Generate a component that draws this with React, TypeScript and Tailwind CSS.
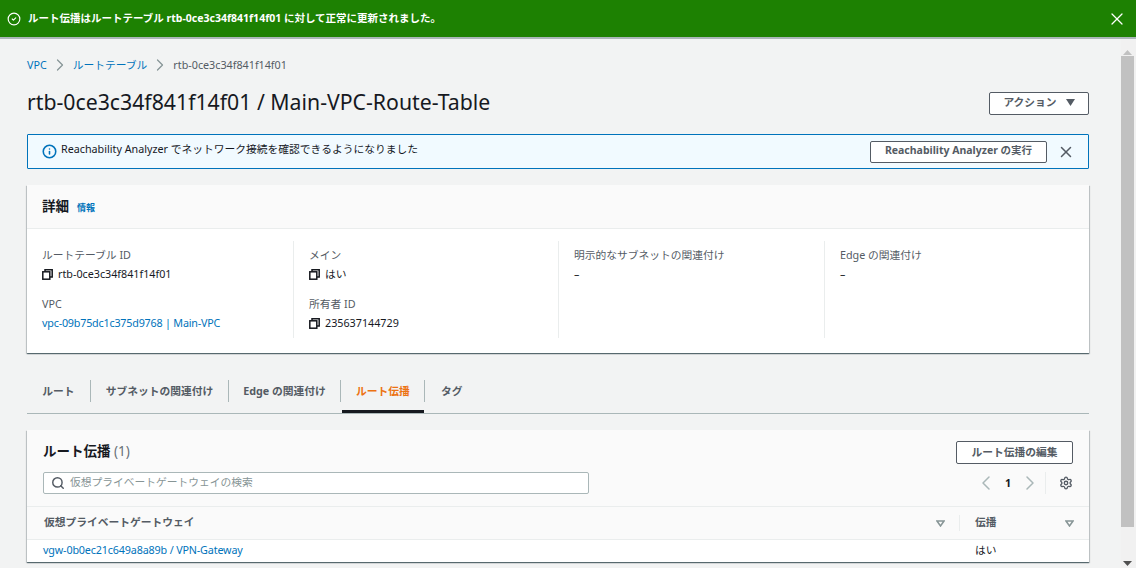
import { X, ChevronLeft, ChevronRight, Search, Settings, Info, CircleCheck } from "lucide-react";

const FONT = "[font-family:'Noto_Sans','Noto_Sans_CJK_JP',sans-serif]";

function CopyIcon() {
  return (
    <svg width="11" height="11" viewBox="0 0 11 11" fill="none" stroke="#16191f" strokeWidth="1.5" className="shrink-0">
      <rect x="0.8" y="2.8" width="7" height="7.4" fill="#fff" />
      <path d="M3 2.5V0.8H10.2V8H8" />
    </svg>
  );
}

function SortIcon() {
  return (
    <svg width="9" height="7" viewBox="0 0 9 7" fill="none" stroke="#879596" strokeWidth="1.5">
      <path d="M1 1H8L4.5 6Z" />
    </svg>
  );
}

function Field({ label, children }: { label: string; children: React.ReactNode }) {
  return (
    <div className="h-[49px]">
      <div className="text-[#545b64] leading-[20px]">{label}</div>
      <div className="flex items-center gap-[5px] leading-[18px] text-[#16191f]">{children}</div>
    </div>
  );
}

const tabs = [
  { name: "ルート", w: "w-[64px]" },
  { name: "サブネットの関連付け", w: "w-[138px]" },
  { name: "Edge の関連付け", w: "w-[112px]" },
];

export default function App() {
  return (
    <div className={`${FONT} h-[568px] w-[1136px] overflow-hidden bg-[#f2f3f3] text-[10.75px] flex flex-col`}>
      <div className="h-[39px] shrink-0 bg-[#1d8102] border-b-2 border-[#aab7b8] flex items-center pl-[7px] pr-[9px] text-white">
        <CircleCheck size={14} strokeWidth={2} />
        <span className="ml-[7px] text-[10.5px] font-bold flex-1">ルート伝播はルートテーブル rtb-0ce3c34f841f14f01 に対して正常に更新されました。</span>
        <X size={20} strokeWidth={1.5} />
      </div>

      <div className="flex-1 flex min-h-0">
        <main className="flex-1 pl-[27px] pr-[32px] min-w-0">
          <nav className="h-[52px] pt-[17px] flex items-start text-[#0073bb] leading-[18px]">
            <span>VPC</span>
            <ChevronRight size={20} strokeWidth={1.5} className="mx-[3px] -mt-[1px] text-[#879596]" />
            <span>ルートテーブル</span>
            <ChevronRight size={20} strokeWidth={1.5} className="mx-[3px] -mt-[1px] text-[#879596]" />
            <span className="text-[#545b64]">rtb-0ce3c34f841f14f01</span>
          </nav>

          <div className="flex items-center justify-between h-[24px]">
            <h1 className="text-[21.25px] text-[#16191f] leading-[24px] pb-[2px]">rtb-0ce3c34f841f14f01 / Main-VPC-Route-Table</h1>
            <button className="w-[100px] h-[23px] pb-[2px] bg-white border border-[#545b64] rounded-[2px] font-bold text-[#545b64] flex items-center justify-center gap-[9px]">
              アクション
              <svg width="9" height="7" viewBox="0 0 9 7"><path d="M0 0H9L4.5 7Z" fill="#545b64" /></svg>
            </button>
          </div>

          <div className="mt-[19px] h-[35px] bg-[#f1faff] border border-[#0073bb] rounded-[1px] flex items-center pl-[14px] pr-[13px] text-[#16191f]">
            <Info size={15} strokeWidth={2.5} className="text-[#0073bb]" />
            <span className="ml-[4px] mb-[5px] flex-1">Reachability Analyzer でネットワーク接続を確認できるようになりました</span>
            <button className="w-[177px] h-[22px] pb-[2px] bg-white border border-[#545b64] rounded-[2px] text-[10.5px] font-bold text-[#545b64]">Reachability Analyzer の実行</button>
            <X size={18} strokeWidth={2} className="ml-[10px] text-[#545b64]" />
          </div>

          <section className="mt-[16px] h-[168px] bg-white shadow-[0_1px_1px_0_rgba(0,28,36,0.5),1px_1px_1px_0_rgba(0,28,36,0.15),-1px_1px_1px_0_rgba(0,28,36,0.15)]">
            <div className="h-[44px] bg-[#fafafa] border-b border-[#eaeded] pl-[15px] flex items-center gap-[8px]">
              <h2 className="text-[13.5px] font-bold text-[#16191f]">詳細</h2>
              <span className="text-[9px] font-bold text-[#0073bb] mt-[2px]">情報</span>
            </div>
            <div className="grid grid-cols-[267px_265px_266px_1fr] pt-[12px]">
              <div className="h-[97px] pl-[15px] pt-[4px] border-r border-[#eaeded]">
                <Field label="ルートテーブル ID">
                  <CopyIcon />
                  rtb-0ce3c34f841f14f01
                </Field>
                <Field label="VPC">
                  <span className="text-[#0073bb] tracking-[-0.2px]">vpc-09b75dc1c375d9768 | Main-VPC</span>
                </Field>
              </div>
              <div className="h-[97px] pl-[15px] pt-[4px] border-r border-[#eaeded]">
                <Field label="メイン">
                  <CopyIcon />
                  はい
                </Field>
                <Field label="所有者 ID">
                  <CopyIcon />
                  235637144729
                </Field>
              </div>
              <div className="h-[97px] pl-[15px] pt-[4px] border-r border-[#eaeded]">
                <Field label="明示的なサブネットの関連付け">–</Field>
              </div>
              <div className="h-[97px] pl-[15px] pt-[4px]">
                <Field label="Edge の関連付け">–</Field>
              </div>
            </div>
          </section>

          <div className="mt-[26px] h-[35px] border-b border-[#aab7b8] flex font-bold text-[#545b64]">
            {tabs.map((t) => (
              <div key={t.name} className={`${t.w} h-[22px] mt-[1px] shrink-0 border-r border-[#aab7b8] flex items-center justify-center`}>
                {t.name}
              </div>
            ))}
            <div className="w-[82px] h-[34px] ml-[1px] border-b-[3px] border-[#16191f] text-[#ec7211]">
              <div className="h-[22px] mt-[1px] flex items-center justify-center">ルート伝播</div>
            </div>
            <div className="h-[22px] mt-[1px] border-l border-[#aab7b8] pl-[16px] flex items-center">タグ</div>
          </div>

          <section className="mt-[16px] h-[132px] bg-white shadow-[0_1px_1px_0_rgba(0,28,36,0.5),1px_1px_1px_0_rgba(0,28,36,0.15),-1px_1px_1px_0_rgba(0,28,36,0.15)]">
            <div className="h-[76px] bg-[#fafafa] pl-[16px] pr-[16px] pt-[11px] flex justify-between">
              <div className="w-[546px]">
                <h2 className="text-[13.5px] font-bold text-[#16191f] leading-[21px]">
                  ルート伝播 <span className="font-normal text-[#687078]">(1)</span>
                </h2>
                <div className="mt-[10px] h-[22px] bg-white border border-[#aab7b8] rounded-[2px] flex items-center pl-[7px] gap-[5px] text-[#879596]">
                  <Search size={14} strokeWidth={2.5} className="text-[#545b64]" />
                  <span className="pb-[2px]">仮想プライベートゲートウェイの検索</span>
                </div>
              </div>
              <div className="flex flex-col items-end">
                <button className="w-[117px] h-[23px] bg-white border border-[#545b64] rounded-[2px] font-bold text-[#545b64]">ルート伝播の編集</button>
                <div className="mt-[8px] h-[22px] flex items-center">
                  <ChevronLeft size={24} strokeWidth={1.5} className="text-[#aab7b8]" />
                  <span className="w-[20px] text-center font-bold text-[#16191f]">1</span>
                  <ChevronRight size={24} strokeWidth={1.5} className="text-[#aab7b8]" />
                  <div className="ml-[3px] mr-[13px] h-[22px] border-l border-[#eaeded]" />
                  <Settings size={14} strokeWidth={2.25} className="text-[#545b64]" />
                </div>
              </div>
            </div>
            <div className="h-[34px] bg-[#fafafa] border-y border-[#eaeded] flex items-center font-bold text-[#545b64]">
              <div className="flex-1 flex items-center justify-between pl-[17px] pr-[14px]">
                <span className="pb-[2px]">仮想プライベートゲートウェイ</span>
                <SortIcon />
              </div>
              <div className="w-[130px] h-[16px] border-l border-[#eaeded] flex items-center justify-between pl-[15px] pr-[15px]">
                <span className="pb-[2px]">伝播</span>
                <SortIcon />
              </div>
            </div>
            <div className="h-[22px] flex items-center pb-[2px]">
              <div className="flex-1 pl-[16px] text-[#0073bb] tracking-[-0.15px]">vgw-0b0ec21c649a8a89b / VPN-Gateway</div>
              <div className="w-[130px] pl-[16px] text-[#16191f]">はい</div>
            </div>
          </section>
        </main>

        <aside className="w-[15px] shrink-0 bg-[#f1f1f1] flex flex-col items-center pr-[2px]">
          <svg width="9" height="5" viewBox="0 0 9 5" className="mt-[11px]"><path d="M0 5H9L4.5 0Z" fill="#c1c1c1" /></svg>
          <div className="w-[13px] h-[471px] mt-[1px] bg-[#c1c1c1]" />
          <svg width="9" height="5" viewBox="0 0 9 5" className="mt-[34px]"><path d="M0 0H9L4.5 5Z" fill="#505050" /></svg>
        </aside>
      </div>
    </div>
  );
}
